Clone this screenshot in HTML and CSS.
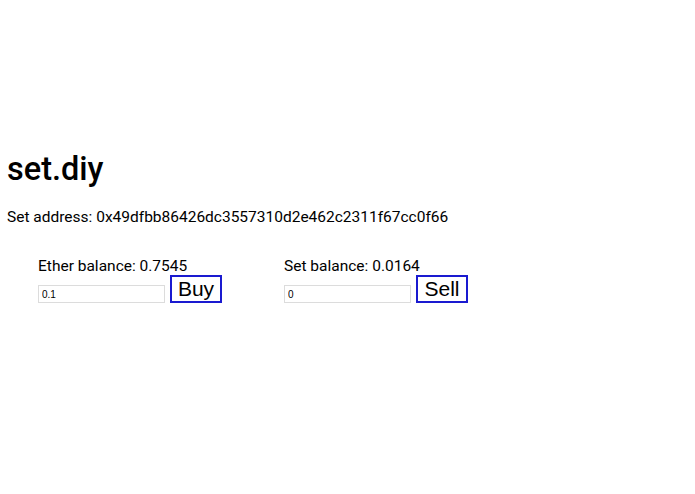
FILE: index.html
```html
<!DOCTYPE html>
<html>
<head>
<meta charset="utf-8">
<link rel="stylesheet" href="styles.css">
</head>
<body>
<div class="app">
  <h1 class="title">set.diy</h1>
  <p class="address">Set address: 0x49dfbb86426dc3557310d2e462c2311f67cc0f66</p>
  <div class="panels">
    <div class="panel">
      <div class="label">Ether balance: 0.7545</div>
      <div class="row">
        <input class="amount" type="text" value="0.1">
        <button class="action">Buy</button>
      </div>
    </div>
    <div class="panel">
      <div class="label">Set balance: 0.0164</div>
      <div class="row">
        <input class="amount" type="text" value="0">
        <button class="action">Sell</button>
      </div>
    </div>
  </div>
</div>
</body>
</html>
```
FILE: styles.css
```css
html, body {
  margin: 0;
  padding: 0;
  background: #fff;
}
body {
  font-family: Roboto, "Liberation Sans", sans-serif;
  color: #000;
}
.app {
  padding: 150px 0 0 7px;
}
.title {
  margin: 0;
  font-size: 32.5px;
  font-weight: 500;
  line-height: 38px;
}
.address {
  margin: 20px 0 0;
  font-size: 15.5px;
  line-height: 19px;
}
.panels {
  display: flex;
  margin-top: 31px;
  padding-left: 31px;
  gap: 0;
}
.panel {
  width: 246px;
}
.label {
  font-size: 15.5px;
  line-height: 17px;
}
.row {
  display: flex;
  align-items: flex-end;
  gap: 5px;
}
.amount {
  box-sizing: border-box;
  width: 127px;
  height: 18px;
  margin: 0;
  padding: 0 3px;
  border: 1px solid #dcdcdc;
  font-family: "Liberation Sans", Arial, sans-serif;
  font-size: 10px;
  color: #000;
  outline: none;
}
.action {
  box-sizing: border-box;
  width: 52px;
  height: 28px;
  margin: 0;
  padding: 0;
  border: 2px solid #1a1ad0;
  background: #fff;
  font-family: "Liberation Sans", Arial, sans-serif;
  font-size: 21px;
  color: #000;
  line-height: 24px;
}
```
